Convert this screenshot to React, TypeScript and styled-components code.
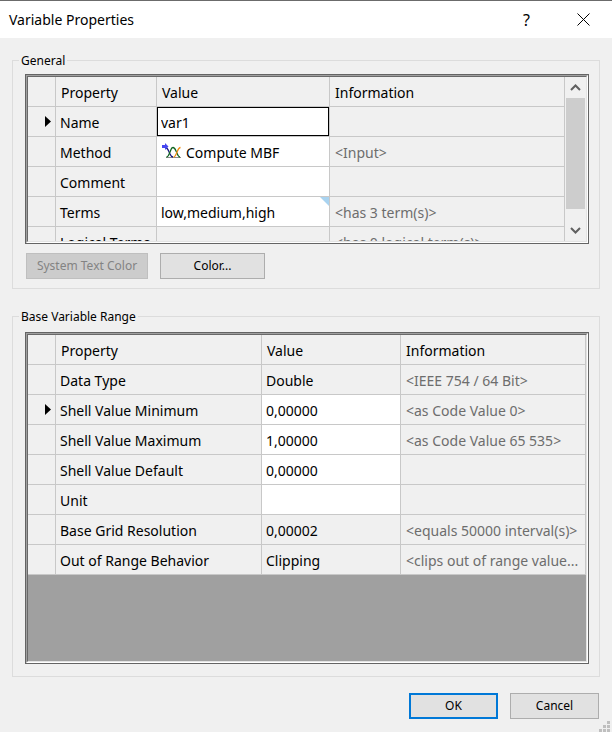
import React, { useState } from "react";
import styled, { createGlobalStyle, css } from "styled-components";

const GlobalStyle = createGlobalStyle`
  * { box-sizing: border-box; }
  body { margin: 0; background: #f0f0f0; }
`;

const uiFont = `"Noto Sans", "Open Sans", sans-serif`;

const Dialog = styled.main`
  display: flex;
  flex-direction: column;
  min-height: 100vh;
  background: #f0f0f0;
  border-top: 1px solid #6b6b6b;
  color: #000;
  font: 14px/20px ${uiFont};
`;

const TitleBar = styled.header`
  display: flex;
  align-items: center;
  height: 37px;
  padding: 0 0 0 9px;
  background: #fff;
`;

const Title = styled.h1`
  flex: 1;
  margin: 0;
  font: 14px/20px ${uiFont};
`;

const CaptionButton = styled.button`
  display: flex;
  align-items: center;
  justify-content: center;
  width: 57px;
  height: 37px;
  padding: 0;
  border: 0;
  background: transparent;
  font: 16px/20px ${uiFont};
  color: #000;
`;

const Content = styled.form`
  display: flex;
  flex: 1;
  flex-direction: column;
  gap: 19px;
  padding: 14px 12px 13px;
`;

const Group = styled.fieldset<{ $tall?: boolean }>`
  display: flex;
  flex-direction: column;
  gap: 9px;
  min-width: 0;
  margin: 0;
  padding: ${(p) => (p.$tall ? "7px 10px 12px 12px" : "5px 10px 9px 12px")};
  border: 1px solid #dcdcdc;
`;

const Legend = styled.legend`
  margin-left: -6px;
  padding: 0 2px;
  font: 12px/17px ${uiFont};
`;

const GridFrame = styled.div`
  display: flex;
  border: 1px solid #646464;
`;

const GridBevel = styled.div`
  display: flex;
  flex: 1;
  min-width: 0;
  border: 1px solid;
  border-color: #a0a0a0 #fff #fff #a0a0a0;
`;

const GridView = styled.div<{ $clip?: boolean }>`
  display: flex;
  flex: 1;
  min-width: 0;
  border: 1px solid;
  border-color: #696969 #e3e3e3 #e3e3e3 #696969;
  background: #a0a0a0;
  ${(p) =>
    p.$clip
      ? css`
          height: 166px;
          overflow: hidden;
        `
      : css`
          min-height: 328px;
        `}
`;

const Table = styled.table`
  flex: 1;
  align-self: flex-start;
  width: 100%;
  min-width: 0;
  table-layout: fixed;
  border-collapse: separate;
  border-spacing: 0;
`;

const Col = styled.col<{ $w?: number }>`
  ${(p) => p.$w && `width: ${p.$w}px;`}
`;

const cell = css`
  height: 30px;
  border: solid #c8c8c8;
  border-width: 0 1px 1px 0;
  background: #f0f0f0;
  font-weight: 400;
  text-align: left;
  white-space: nowrap;
  overflow: hidden;
  text-overflow: ellipsis;
`;

const HeadCell = styled.th`
  ${cell}
  padding: 2px 0 0 5px;
`;

const LabelCell = styled.th`
  ${cell}
  padding: 2px 0 0 4px;
`;

const InfoCell = styled.td`
  ${cell}
  padding: 2px 4px 0 5px;
  color: #6d6d6d;
`;

const MarkerCell = styled.td`
  ${cell}
  padding: 0 4px 0 0;
  text-align: right;
  line-height: 0;
`;

const ValueCell = styled.td<{ $white?: boolean; $flush?: boolean }>`
  ${cell}
  position: relative;
  padding: ${(p) => (p.$flush ? "0" : "2px 0 0 4px")};
  ${(p) => p.$white && "background: #fff;"}
`;

const ValueInput = styled.input<{ $active?: boolean }>`
  display: block;
  width: 100%;
  height: 29px;
  padding: ${(p) => (p.$active ? "2px 3px 0" : "2px 4px 0")};
  border: ${(p) => (p.$active ? "1px solid #000" : "0")};
  border-radius: 0;
  outline: 0;
  background: #fff;
  font: 14px/20px ${uiFont};
  color: #000;
`;

const IconText = styled.span`
  display: flex;
  align-items: center;
  gap: 4px;
`;

const Corner = styled.svg`
  position: absolute;
  top: 0;
  right: 0;
`;

const ScrollBar = styled.div`
  display: flex;
  flex: none;
  flex-direction: column;
  width: 21px;
  padding: 0 1px;
  background: #f0f0f0;
`;

const ScrollButton = styled.button`
  display: flex;
  align-items: center;
  justify-content: center;
  height: 21px;
  padding: 0;
  border: 0;
  background: transparent;
`;

const ScrollTrack = styled.div`
  flex: 1;
`;

const ScrollThumb = styled.div`
  height: 111px;
  background: #cdcdcd;
`;

const ButtonRow = styled.div<{ $end?: boolean }>`
  display: flex;
  gap: 12px;
  padding: 0 1px;
  ${(p) => p.$end && "justify-content: flex-end; margin-top: -3px;"}
`;

const Button = styled.button<{ $w: number; $primary?: boolean }>`
  width: ${(p) => p.$w}px;
  height: 26px;
  padding: 0;
  border: ${(p) => (p.$primary ? "2px solid #0078d7" : "1px solid #adadad")};
  border-radius: 0;
  background: #e1e1e1;
  font: 12px/16px ${uiFont};
  color: #000;
  &:disabled {
    border-color: #bfbfbf;
    background: #cccccc;
    color: #838383;
  }
`;

const Grip = styled.svg`
  position: fixed;
  right: 2px;
  bottom: 0;
`;

const RowMarker = () => (
  <svg width="6" height="11" viewBox="0 0 6 11" aria-hidden="true">
    <path d="M0 0L6 5.500L0 11Z" fill="#000" />
  </svg>
);

const MethodIcon = () => (
  <svg width="21" height="20" viewBox="0 0 21 20" fill="none" aria-hidden="true">
    <path d="M5 14.500H20" stroke="#8c8c8c" />
    <path d="M5 5C7 5 7.500 8 8.500 10S10 14 12 14" stroke="#14147c" strokeWidth="1.300" />
    <path d="M5.500 14C7.500 14 8 11 9 9S10 4.500 12 4.500S14.500 7 15.500 9S17 14 19 14" stroke="#0f6420" strokeWidth="1.300" />
    <path d="M12.500 14C14.500 14 15 11 16 9S17.500 4.500 19.500 4.500" stroke="#f08c10" strokeWidth="1.300" />
    <path d="M1 2H4V0L7.500 3.500L4 7V5H1Z" fill="#4646f0" />
  </svg>
);

type Row = {
  label: string;
  value?: string;
  info?: string;
  editable?: boolean;
  method?: boolean;
  corner?: boolean;
  outlined?: boolean;
};

const generalRows: Row[] = [
  { label: "Name", value: "var1", editable: true, outlined: true },
  { label: "Method", value: "Compute MBF", info: "<Input>", method: true },
  { label: "Comment", value: "", editable: true },
  { label: "Terms", value: "low,medium,high", info: "<has 3 term(s)>", editable: true, corner: true },
  { label: "Logical Terms", info: "<has 0 logical term(s)>" },
];

const rangeRows: Row[] = [
  { label: "Data Type", value: "Double", info: "<IEEE 754 / 64 Bit>" },
  { label: "Shell Value Minimum", value: "0,00000", info: "<as Code Value 0>", editable: true },
  { label: "Shell Value Maximum", value: "1,00000", info: "<as Code Value 65 535>", editable: true },
  { label: "Shell Value Default", value: "0,00000", editable: true },
  { label: "Unit", value: "", editable: true },
  { label: "Base Grid Resolution", value: "0,00002", info: "<equals 50000 interval(s)>" },
  { label: "Out of Range Behavior", value: "Clipping", info: "<clips out of range value..." },
];

function PropertyTable({ rows, widths, current }: { rows: Row[]; widths: number[]; current: number }) {
  const [selected, setSelected] = useState(current);
  return (
    <Table>
      <colgroup>
        {widths.map((w, i) => (
          <Col key={i} $w={w} />
        ))}
        <Col />
      </colgroup>
      <thead>
        <tr>
          <MarkerCell />
          <HeadCell scope="col">Property</HeadCell>
          <HeadCell scope="col">Value</HeadCell>
          <HeadCell scope="col">Information</HeadCell>
        </tr>
      </thead>
      <tbody>
        {rows.map((r, i) => (
          <tr key={r.label} onClick={() => setSelected(i)}>
            <MarkerCell>{selected === i && <RowMarker />}</MarkerCell>
            <LabelCell scope="row">{r.label}</LabelCell>
            <ValueCell $white={r.editable || r.method} $flush={r.editable}>
              {r.editable ? (
                <ValueInput aria-label={r.label} defaultValue={r.value} $active={r.outlined} />
              ) : r.method ? (
                <IconText>
                  <MethodIcon />
                  {r.value}
                </IconText>
              ) : (
                r.value
              )}
              {r.corner && (
                <Corner width="9" height="9" viewBox="0 0 9 9" aria-hidden="true">
                  <path d="M0 0H9V9Z" fill="#a9d3f0" />
                </Corner>
              )}
            </ValueCell>
            <InfoCell>{r.info}</InfoCell>
          </tr>
        ))}
      </tbody>
    </Table>
  );
}

export default function App() {
  return (
    <>
      <GlobalStyle />
      <Dialog>
        <TitleBar>
          <Title>Variable Properties</Title>
          <CaptionButton type="button" aria-label="Help">?</CaptionButton>
          <CaptionButton type="button" aria-label="Close">
            <svg width="13" height="13" viewBox="0 0 13 13" aria-hidden="true">
              <path d="M0.500 0.500L12.500 12.500M12.500 0.500L0.500 12.500" stroke="#000" />
            </svg>
          </CaptionButton>
        </TitleBar>
        <Content onSubmit={(e) => e.preventDefault()}>
          <Group>
            <Legend>General</Legend>
            <GridFrame>
              <GridBevel>
                <GridView $clip>
                  <PropertyTable rows={generalRows} widths={[28, 101, 173]} current={0} />
                  <ScrollBar>
                    <ScrollButton type="button" aria-label="Scroll up">
                      <svg width="11" height="7" viewBox="0 0 11 7" fill="none" aria-hidden="true">
                        <path d="M1 6L5.500 1.500L10 6" stroke="#606060" strokeWidth="2" />
                      </svg>
                    </ScrollButton>
                    <ScrollTrack>
                      <ScrollThumb />
                    </ScrollTrack>
                    <ScrollButton type="button" aria-label="Scroll down">
                      <svg width="11" height="7" viewBox="0 0 11 7" fill="none" aria-hidden="true">
                        <path d="M1 1L5.500 5.500L10 1" stroke="#606060" strokeWidth="2" />
                      </svg>
                    </ScrollButton>
                  </ScrollBar>
                </GridView>
              </GridBevel>
            </GridFrame>
            <ButtonRow>
              <Button type="button" $w={122} disabled>System Text Color</Button>
              <Button type="button" $w={105}>Color...</Button>
            </ButtonRow>
          </Group>
          <Group $tall>
            <Legend>Base Variable Range</Legend>
            <GridFrame>
              <GridBevel>
                <GridView>
                  <PropertyTable rows={rangeRows} widths={[28, 206, 139]} current={1} />
                </GridView>
              </GridBevel>
            </GridFrame>
          </Group>
          <ButtonRow $end>
            <Button type="submit" $w={89} $primary>OK</Button>
            <Button type="button" $w={89}>Cancel</Button>
          </ButtonRow>
        </Content>
        <Grip width="11" height="11" viewBox="0 0 11 11" fill="#bfbfbf" aria-hidden="true">
          <path d="M8 0h3v3h-3zM4 4h3v3h-3zM8 4h3v3h-3zM0 8h3v3h-3zM4 8h3v3h-3zM8 8h3v3h-3z" />
        </Grip>
      </Dialog>
    </>
  );
}
